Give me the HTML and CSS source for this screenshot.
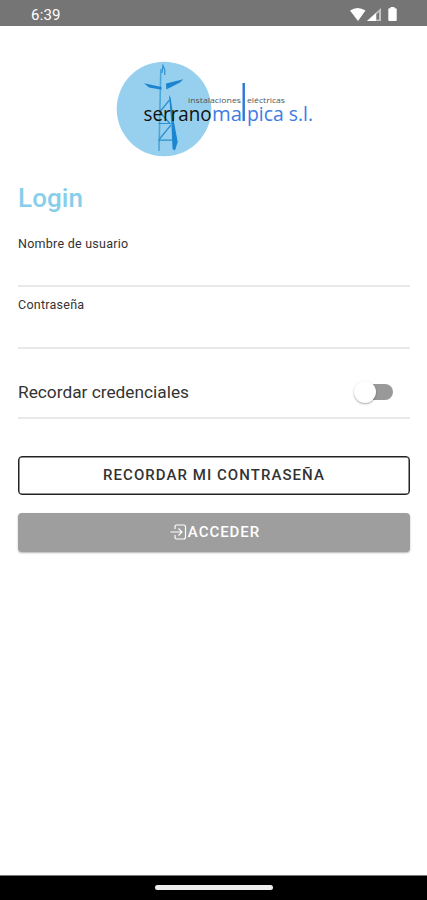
FILE: index.html
```html
<!DOCTYPE html>
<html lang="es">
<head>
<meta charset="utf-8">
<title>Login</title>
<link rel="stylesheet" href="styles.css">
</head>
<body>
<header class="status">
  <span class="time">6:39</span>
  <svg class="status-icons" width="50" height="16" viewBox="0 0 50 16">
    <path fill="#fff" d="M1 3.600Q8.500 -1.600 16.500 3.600L9 14Z"/>
    <path fill="#c4c4c4" d="M32 1V14H18Z"/>
    <path fill="#fff" d="M27 6V14H18Z"/>
    <path fill="#777" d="M27.500 7.500L30 5V12.500H27.500Z"/>
    <path fill="#fff" d="M41.500 0h4v1.300h1.200q1 0 1 1V13q0 1-1 1h-6.400q-1 0-1-1V2.300q0-1 1-1H41.500Z"/>
  </svg>
</header>
<main class="content">
  <svg class="logo" width="200" height="100" viewBox="115 59 200 100">
    <circle cx="164" cy="109" r="47.300" fill="#96d0ee"/>
    <g fill="none" stroke="#2b8fd0" stroke-width="1.200">
      <path stroke="#4ba6dc" stroke-width="1.600" d="M160.800 69L159 151"/>
      <path d="M162 73L163 65.500L164.800 70V75"/>
      <path d="M160.500 111L169.500 100M160.500 113L170 123.500H158.500M159.500 139L171 125M158 140.200H173"/>
    </g>
    <g fill="#1b86cf">
      <path d="M144 83.200L161.500 87V89.800L149 87.500Z"/>
      <path d="M166 83.500L183.300 79.200L180 82.500L166.300 89.500Z"/>
      <path d="M169 95L170.700 98L174 122L177.700 142L175 150.500L172.500 149L171.500 125Z"/>
    </g>
    <g class="logo-small">
      <text x="188" y="103.300" textLength="53" lengthAdjust="spacingAndGlyphs">instalaciones</text>
      <text x="247" y="103.300" textLength="38" lengthAdjust="spacingAndGlyphs">eléctricas</text>
    </g>
    <g class="logo-name">
      <text x="143.500" y="120.500" textLength="68" lengthAdjust="spacingAndGlyphs" fill="#111">serrano</text>
      <text x="212" y="120.500" textLength="30" lengthAdjust="spacingAndGlyphs" fill="#3f7be6">ma</text>
      <text x="247" y="120.500" textLength="66" lengthAdjust="spacingAndGlyphs" fill="#3f7be6">pica s.l.</text>
    </g>
    <path fill="#2a77d4" d="M242.500 83h2.400v38h-2.400Z"/>
  </svg>
  <h1 class="title">Login</h1>
  <label class="field">Nombre de usuario</label>
  <label class="field">Contraseña</label>
  <div class="remember">
    <span>Recordar credenciales</span>
    <span class="switch"><span class="knob"></span></span>
  </div>
  <button class="btn outline">RECORDAR MI CONTRASEÑA</button>
  <button class="btn solid"><svg width="18" height="18" viewBox="0 0 18 18" fill="none" stroke="#fff" stroke-width="1.200">
    <path d="M5 6V3.500q0-1.500 1.500-1.500h7q2 0 2 2v10q0 2-2 2H6.500q-1.500 0-1.500-1.500V12M0.500 9H12M8.500 5.500L12 9L8.500 12.500"/>
  </svg><span>ACCEDER</span></button>
</main>
<footer class="navbar"><span class="handle"></span></footer>
</body>
</html>
```
FILE: styles.css
```css
* { box-sizing: border-box; }
body {
  margin: 0;
  height: 900px;
  display: flex;
  flex-direction: column;
  background: #fff;
  color: #333;
  font-family: Roboto, "Liberation Sans", sans-serif;
  overflow: hidden;
}
.status {
  height: 26px;
  flex: none;
  display: flex;
  justify-content: space-between;
  padding: 7px 28px 0 31px;
  background: #757575;
  color: #fff;
}
.time { font-size: 15px; line-height: 17px; letter-spacing: 0.200px; }
.content {
  flex: 1;
  display: flex;
  flex-direction: column;
  padding: 33px 17px 0 18px;
}
.logo { display: block; flex: none; margin-left: 97px; }
.logo-small { font: 7.500px "Open Sans", sans-serif; fill: #555; }
.logo-name { font: 20px "Open Sans", sans-serif; }
.title {
  margin: 24px 0 0;
  font-size: 26px;
  line-height: 30px;
  font-weight: 500;
  letter-spacing: 0.100px;
  color: #87ceeb;
}
.field {
  height: 62px;
  flex: none;
  padding-top: 10px;
  border-bottom: 2px solid #e9e9e9;
  font-size: 12.500px;
  line-height: 16px;
  letter-spacing: 0.250px;
}
.title + .field { height: 61px; margin-top: 13px; }
.remember {
  height: 70px;
  flex: none;
  display: flex;
  align-items: center;
  justify-content: space-between;
  padding: 17px 17px 0 0;
  border-bottom: 2px solid #e9e9e9;
  font-size: 17.300px;
}
.switch {
  width: 36px;
  height: 16px;
  display: flex;
  align-items: center;
  border-radius: 8px;
  background: #999;
}
.knob {
  width: 22px;
  height: 22px;
  flex: none;
  margin-left: -3px;
  border-radius: 50%;
  background: #fff;
  box-shadow: 0 1px 2px rgba(0, 0, 0, 0.35);
}
.btn {
  height: 39px;
  flex: none;
  display: flex;
  align-items: center;
  justify-content: center;
  padding: 0 0 2px;
  border: 0;
  border-radius: 4px;
  font: 500 15px Roboto, sans-serif;
  letter-spacing: 1.050px;
}
.outline {
  margin-top: 37px;
  border: 1px solid #222;
  box-shadow: inset 0 0 0 0.500px #222;
  background: #fff;
  color: #333;
}
.solid {
  margin-top: 18px;
  padding-left: 2px;
  background: #9e9e9e;
  color: #fff;
  box-shadow: 0 1px 2px rgba(0, 0, 0, 0.3);
  letter-spacing: 0.950px;
}
.navbar {
  height: 25px;
  flex: none;
  display: flex;
  justify-content: center;
  padding-top: 9px;
  border-top: 1px solid #777;
  background: #000;
}
.handle { width: 118px; height: 5px; border-radius: 3px; background: #eee; }
```
